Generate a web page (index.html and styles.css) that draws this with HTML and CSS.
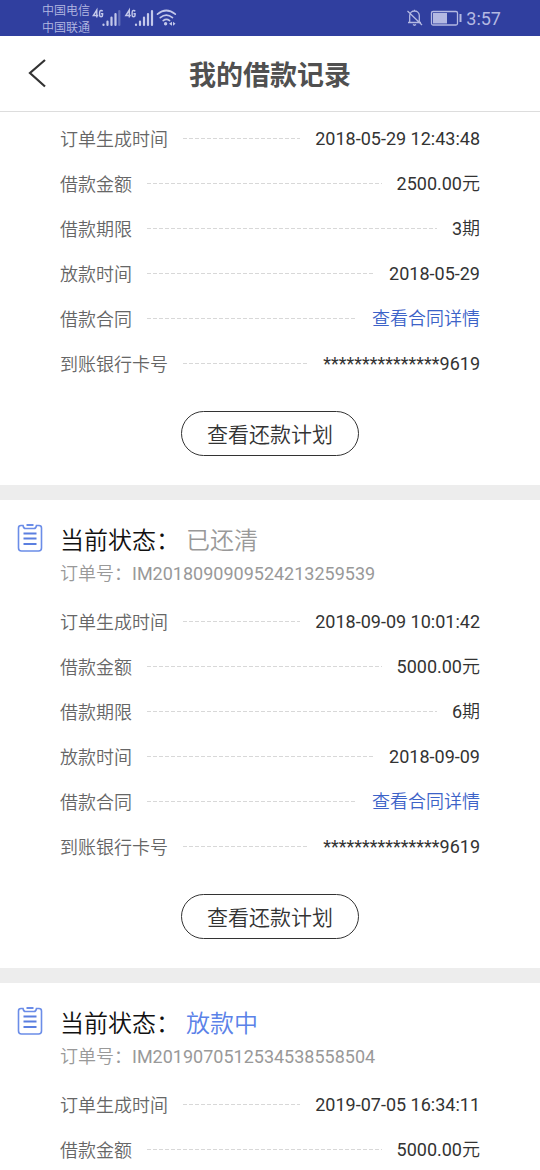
FILE: index.html
```html
<!DOCTYPE html>
<html lang="zh-CN">
<head>
<meta charset="utf-8">
<meta name="viewport" content="width=device-width, initial-scale=1">
<title>我的借款记录</title>
<link rel="stylesheet" href="styles.css">
</head>
<body>
<div class="app">
  <div class="status-bar">
    <div class="carriers"><span>中国电信</span><span>中国联通</span></div>
    <svg class="signals" width="88" height="36" viewBox="0 0 88 36" aria-hidden="true">
      <g fill="none" stroke="#c3c8ea" stroke-width="1.4">
        <path d="M4.800 17.500V10L1.300 15.500h5"/><path d="M10.600 11.400c-.6-1.400-3-1.200-3 1v2.600c0 2.400 3 2.400 3 0v-1.200H9"/>
        <path d="M37.300 17.500V10l-3.500 5.500h5"/><path d="M43.100 11.400c-.6-1.400-3-1.200-3 1v2.600c0 2.400 3 2.400 3 0v-1.200h-1.600"/>
      </g>
      <g fill="none" stroke="#c3c8ea" stroke-width="2.200" stroke-linecap="round">
        <path d="M11.500 24.500v.5M15.500 21.500V25M19.500 17.500V25M23.500 14V25"/>
        <path d="M44 24.500v.5M48 21.500V25M52 17.500V25M56 14V25M60 11V25"/>
        <path d="M27.300 11V25" opacity=".35"/>
      </g>
      <g fill="none" stroke="#c3c8ea" stroke-width="1.700" stroke-linecap="round">
        <path d="M65.500 14.200q8.700-7.400 17.800 0M68.300 17.600q6-4.800 12.200 0M71.200 20.600q3.200-2.300 6.400 0"/>
      </g>
      <path d="M71.900 23.800a1.700 1.700 0 1 0 3.400 0a1.700 1.700 0 1 0-3.400 0M77 23.800l3-2v4zM81 21.800l2.500 2-2.500 2z" fill="#c3c8ea"/>
    </svg>
    <svg class="device" width="56" height="36" viewBox="0 0 56 36" aria-hidden="true">
      <g fill="none" stroke="#b4b9e2" stroke-width="1.300">
        <path d="M2 22.500h13M3.700 22v-6.500c0-6 9.600-6 9.600 0V22M8.500 11V9.700M7 24.600q1.500 1.300 3 0M1.500 11l14.500 14"/>
        <rect x="25.500" y="11.500" width="26" height="13.500" rx="1.500"/>
      </g>
      <path d="M27 13h14v10.500H27zM53.500 14h2v8h-2z" fill="#b4b9e2"/>
    </svg>
    <time class="clock">3:57</time>
  </div>

  <header class="nav">
    <button class="back" type="button" aria-label="返回">
      <svg width="20" height="32" viewBox="0 0 20 32" aria-hidden="true"><path d="M17 2L2 15l15 13.500" fill="none" stroke="#333" stroke-width="2.200"/></svg>
    </button>
    <h1>我的借款记录</h1>
  </header>

  <main class="records">
    <section class="card continued">
      <dl class="rows">
        <div class="row"><dt>订单生成时间</dt><dd>2018-05-29 12:43:48</dd></div>
        <div class="row"><dt>借款金额</dt><dd>2500.00元</dd></div>
        <div class="row"><dt>借款期限</dt><dd>3期</dd></div>
        <div class="row"><dt>放款时间</dt><dd>2018-05-29</dd></div>
        <div class="row"><dt>借款合同</dt><dd><a href="#contract">查看合同详情</a></dd></div>
        <div class="row"><dt>到账银行卡号</dt><dd>***************9619</dd></div>
      </dl>
      <button class="plan" type="button">查看还款计划</button>
    </section>

    <section class="card">
      <div class="card-head">
        <svg class="clip" width="26" height="30" viewBox="0 0 26 30" aria-hidden="true">
          <path d="M6 3.500H4Q1.500 3.500 1.500 6V26Q1.500 29 4.500 29H21.500Q24.500 29 24.500 26V6Q24.500 3.500 22 3.500H19.500Q19 6.500 17 6.500H8.500Q6.500 6.500 6 3.500Z" fill="none" stroke="#6b8de8" stroke-width="1.600"/>
          <path d="M9.500 2h7v2h-7z" fill="#6b8de8"/>
          <path d="M6.500 11.500h13M6.500 16.500h13M6.500 22h13" stroke="#5b7fe0" stroke-width="2"/>
        </svg>
        <div>
          <h2>当前状态：<span class="state">已还清</span></h2>
          <p class="order">订单号：IM2018090909524213259539</p>
        </div>
      </div>
      <dl class="rows">
        <div class="row"><dt>订单生成时间</dt><dd>2018-09-09 10:01:42</dd></div>
        <div class="row"><dt>借款金额</dt><dd>5000.00元</dd></div>
        <div class="row"><dt>借款期限</dt><dd>6期</dd></div>
        <div class="row"><dt>放款时间</dt><dd>2018-09-09</dd></div>
        <div class="row"><dt>借款合同</dt><dd><a href="#contract">查看合同详情</a></dd></div>
        <div class="row"><dt>到账银行卡号</dt><dd>***************9619</dd></div>
      </dl>
      <button class="plan" type="button">查看还款计划</button>
    </section>

    <section class="card">
      <div class="card-head">
        <svg class="clip" width="26" height="30" viewBox="0 0 26 30" aria-hidden="true">
          <path d="M6 3.500H4Q1.500 3.500 1.500 6V26Q1.500 29 4.500 29H21.500Q24.500 29 24.500 26V6Q24.500 3.500 22 3.500H19.500Q19 6.500 17 6.500H8.500Q6.500 6.500 6 3.500Z" fill="none" stroke="#6b8de8" stroke-width="1.600"/>
          <path d="M9.500 2h7v2h-7z" fill="#6b8de8"/>
          <path d="M6.500 11.500h13M6.500 16.500h13M6.500 22h13" stroke="#5b7fe0" stroke-width="2"/>
        </svg>
        <div>
          <h2>当前状态：<span class="state active">放款中</span></h2>
          <p class="order">订单号：IM2019070512534538558504</p>
        </div>
      </div>
      <dl class="rows">
        <div class="row"><dt>订单生成时间</dt><dd>2019-07-05 16:34:11</dd></div>
        <div class="row"><dt>借款金额</dt><dd>5000.00元</dd></div>
      </dl>
    </section>
  </main>
</div>
</body>
</html>
```
FILE: styles.css
```css
* { box-sizing: border-box; }

body, h1, h2, p, dl, dd { margin: 0; }

body {
  background: #fff;
  color: #333;
  font-family: Roboto, "Noto Sans CJK SC DemiLight", "Noto Sans CJK SC", sans-serif;
  font-size: 18px;
}

button {
  background: none;
  border: 0;
  padding: 0;
  color: inherit;
  font-family: inherit;
}

.app {
  display: flex;
  flex-direction: column;
  height: 100vh;
}

.status-bar {
  flex: none;
  display: flex;
  align-items: center;
  height: 36px;
  padding: 0 39px 0 42px;
  background: #303f9f;
  color: #b4b9e2;
}

.carriers {
  display: flex;
  flex-direction: column;
  padding-top: 4px;
  font-size: 12px;
  font-weight: 350;
  line-height: 17px;
}

.signals { margin-left: 2px; }
.device { margin-left: auto; }

.clock {
  margin-left: 4px;
  font-size: 18px;
}

.nav {
  flex: none;
  display: grid;
  grid-template-columns: 60px 1fr 60px;
  align-items: center;
  height: 76px;
  border-bottom: 1px solid #ddd;
}

.back {
  display: flex;
  justify-content: flex-end;
  padding-right: 12px;
}

.nav h1 {
  font-family: "Noto Sans CJK SC", sans-serif;
  font-size: 27px;
  font-weight: 700;
  line-height: 36px;
  color: #505050;
  text-align: center;
}

.records {
  flex: 1;
  min-height: 0;
  overflow-y: auto;
  scrollbar-width: none;
}

.card {
  display: flex;
  flex-direction: column;
  padding: 22px 60px 29px 17px;
}

.card + .card { border-top: 15px solid #ededed; }
.card.continued { padding-top: 4px; }

.card-head {
  display: grid;
  grid-template-columns: 43px 1fr;
  margin-bottom: 11px;
}

.card h2 {
  font-size: 24px;
  font-weight: 350;
  line-height: 38px;
  color: #111;
}

.state {
  margin-left: 6px;
  color: #999;
}

.state.active { color: #5b82e8; }

.order {
  font-size: 18px;
  line-height: 28px;
  color: #999;
}

.rows { margin-left: 43px; }

.row {
  display: flex;
  align-items: center;
  gap: 15px;
  height: 45px;
  line-height: 27px;
}

.row::before {
  content: "";
  order: 1;
  flex: 1;
  height: 1px;
  background: repeating-linear-gradient(90deg, #d8d8d8 0 4px, transparent 4px 6px);
}

.row dt {
  padding-top: 2px;
  color: #666;
  font-weight: 350;
}

.row dd { order: 2; }

.row a {
  color: #3d63c8;
  font-weight: 350;
  text-decoration: none;
}

.plan {
  align-self: center;
  width: 178px;
  height: 45px;
  margin: 25px 0 0 43px;
  padding-top: 3px;
  border: 1px solid #333;
  border-radius: 23px;
  font-size: 21px;
  font-weight: 350;
  line-height: 27px;
}
```
